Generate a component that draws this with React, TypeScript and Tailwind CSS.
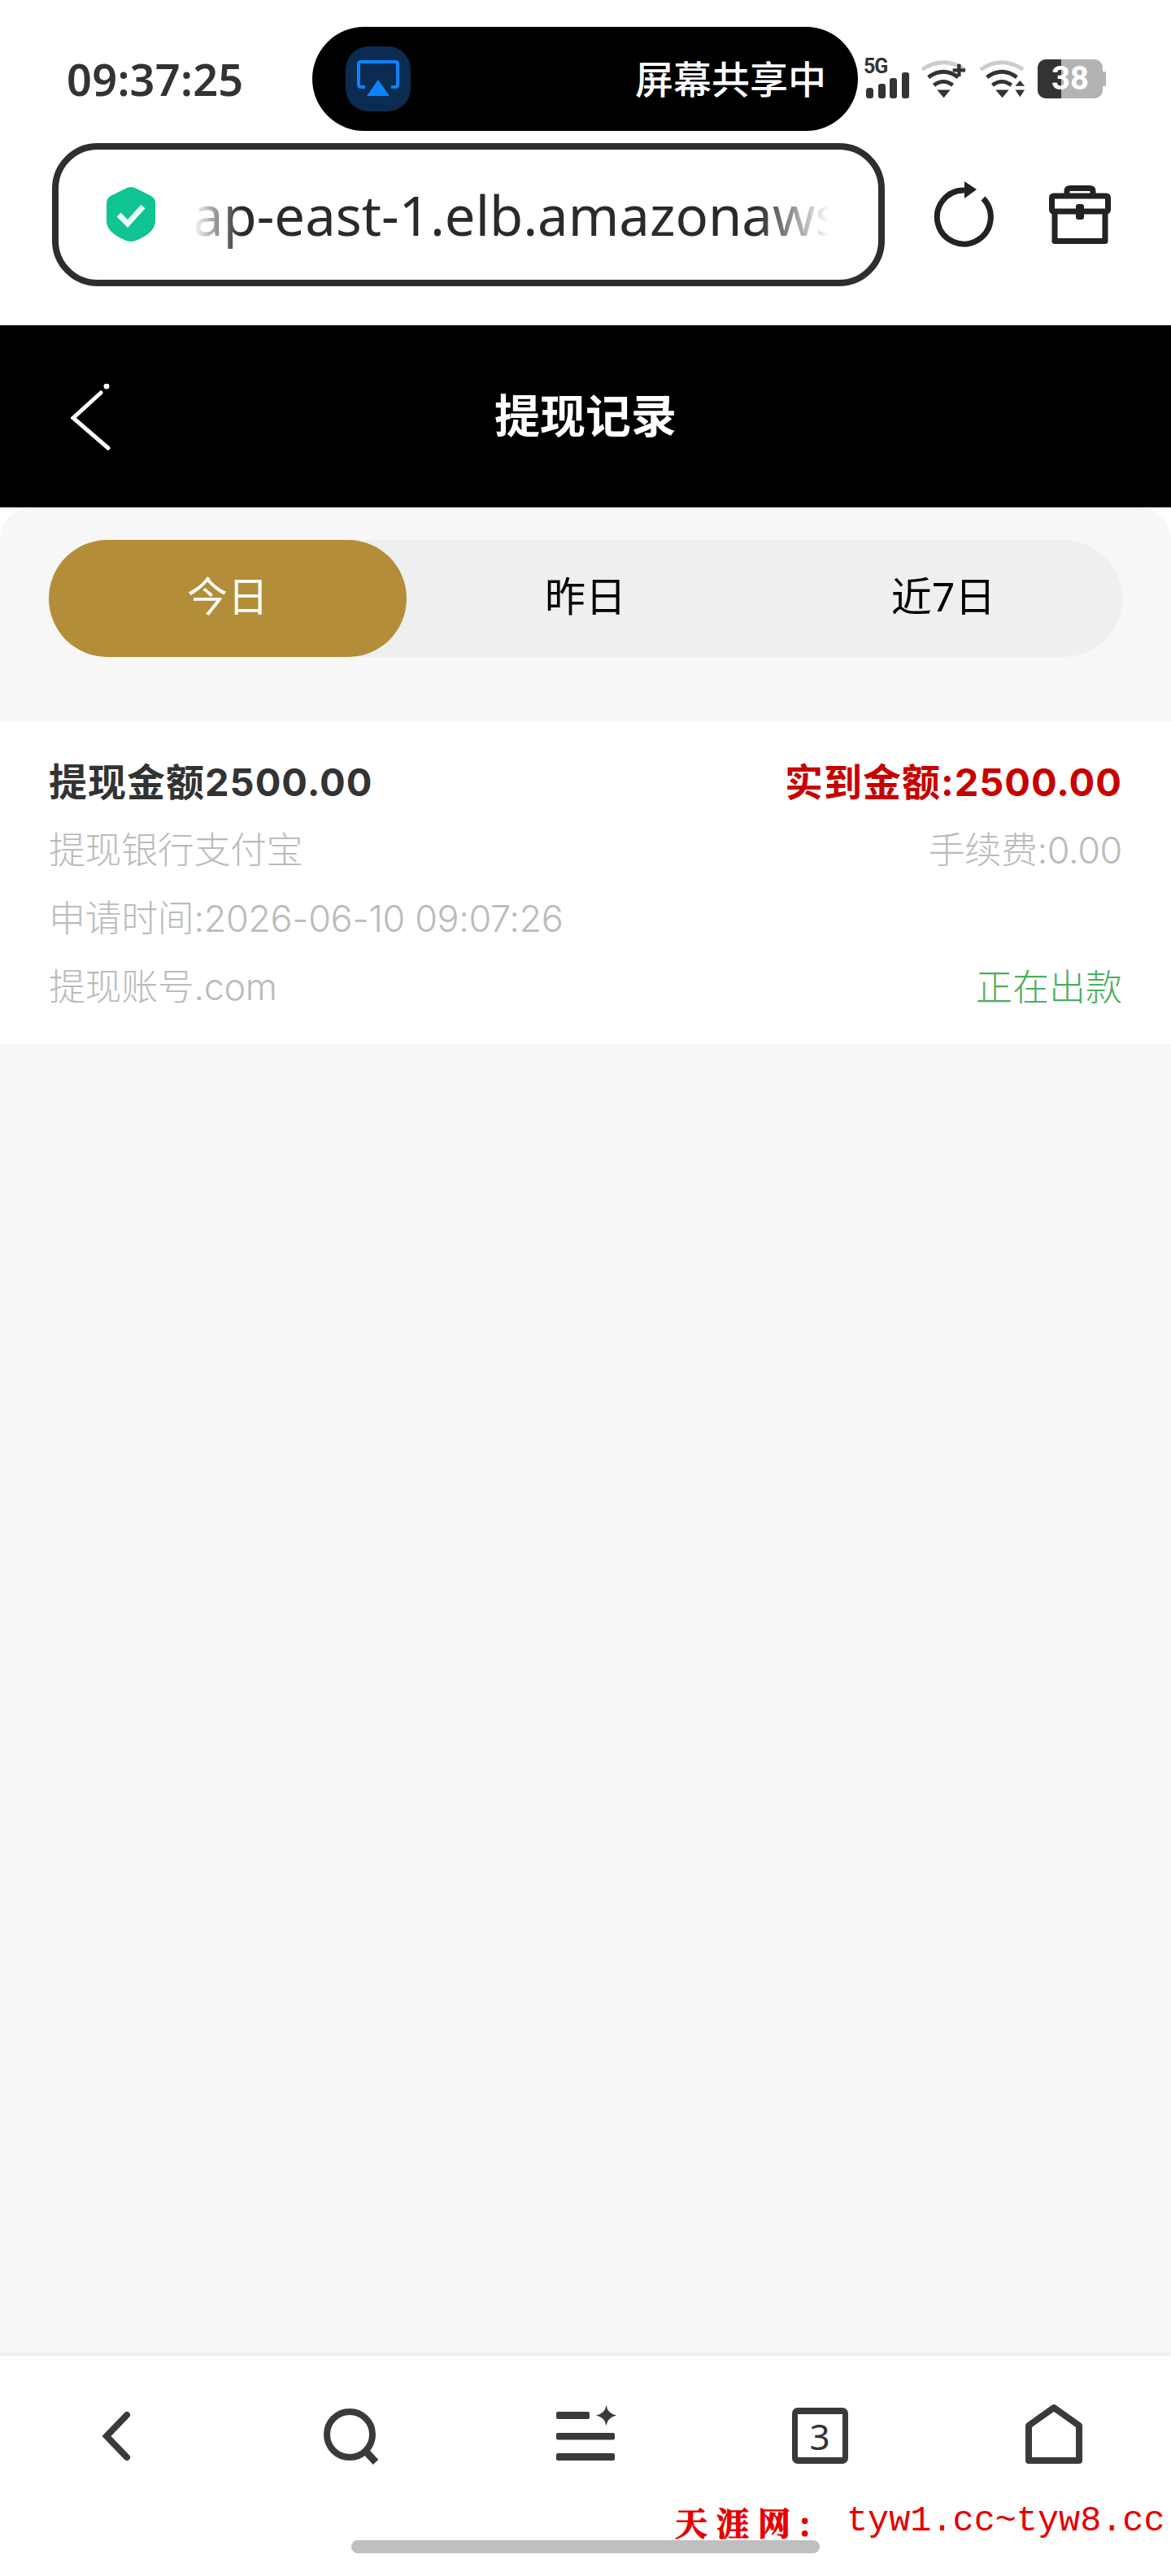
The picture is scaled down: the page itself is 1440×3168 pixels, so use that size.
import React from "react";

const Shield = () => (
  <svg width="62" height="68" viewBox="0 0 62 68" className="shrink-0">
    <path d="M31 0 Q35 0 40 3 L56 11 Q61 14 61 20 V42 Q61 56 37 66 Q31 68 25 66 Q1 56 1 42 V20 Q1 14 6 11 L22 3 Q27 0 31 0 Z" fill="#0fc492" />
    <path d="M16 34 L27 45 L46 24" fill="none" stroke="#e9fbf5" strokeWidth="7" />
  </svg>
);

const Refresh = () => (
  <svg width="74" height="82" viewBox="0 0 74 82" className="overflow-visible">
    <path d="M60 21 A33 33 0 1 1 37 11" fill="none" stroke="#222" strokeWidth="7" />
    <path d="M37 0 L52 10 L37 21 Z" fill="#222" />
  </svg>
);

const Case = () => (
  <svg width="76" height="72" viewBox="0 0 76 72" fill="none" stroke="#222" strokeWidth="7" strokeLinejoin="round">
    <path d="M22 12 V7 Q22 3.500 26 3.500 H50 Q54 3.500 54 7 V12" />
    <rect x="3.500" y="13" width="69" height="19" rx="2" />
    <path d="M7 32 V68.500 H69 V32" />
    <rect x="34" y="24" width="8" height="17" rx="2" fill="#222" strokeWidth="2" />
  </svg>
);

const Signal = () => (
  <div className="relative w-[56px] h-[48px]">
    <span className="absolute left-0 top-[-5px] text-[25px] leading-[28px] font-bold text-[#333] font-['Roboto',sans-serif] tracking-[-1px]">5G</span>
    <svg width="56" height="48" viewBox="0 0 56 48" fill="#333">
      <rect x="3" y="35" width="9" height="13" rx="3.500" />
      <rect x="18" y="30" width="9" height="18" rx="3" />
      <rect x="32" y="23" width="9" height="25" rx="3" />
      <rect x="47" y="16" width="9" height="32" rx="3" />
    </svg>
  </div>
);

const Wifi = ({ plus }: { plus?: boolean }) => (
  <svg width="58" height="48" viewBox="0 0 60 48" fill="none">
    <path d="M2 12 Q29 -6 56 12" stroke="#ccc" strokeWidth="5" />
    <path d="M10 22 Q29 8 48 22" stroke="#333" strokeWidth="5" />
    <path d="M17 32 Q29 23 41 32" stroke="#333" strokeWidth="5" />
    <path d="M21 38 H38 L29.500 48 Z" fill="#333" />
    {plus ? (
      <path d="M41 13 H57 M49 5 V21" stroke="#333" strokeWidth="4.500" />
    ) : (
      <>
        <path d="M46 33 H58 L52 26 Z" fill="#333" />
        <path d="M46 38 H58 L52 47 Z" fill="#333" />
      </>
    )}
  </svg>
);

const Battery = () => (
  <div className="flex items-center w-[84px] h-[48px]">
    <div className="relative w-[80px] h-[48px] rounded-[10px] overflow-hidden bg-[#b3b3b3] flex items-center justify-center">
      <div className="absolute left-0 top-0 w-[29px] h-[48px] bg-[#333]" />
      <span className="relative text-white font-bold text-[40px] leading-none font-['Roboto',sans-serif]">38</span>
    </div>
    <div className="w-[4px] h-[18px] bg-[#b3b3b3] rounded-r-[2px]" />
  </div>
);

const Row = ({ left, right, rightClass, leftClass }: { left: string; right?: string; rightClass?: string; leftClass?: string }) => (
  <div className="flex items-center justify-between h-[84px]">
    <span className={leftClass}>{left}</span>
    {right ? <span className={rightClass}>{right}</span> : null}
  </div>
);

export default function App() {
  const gray = "text-[45px] text-[#bbbbbb] font-light leading-none tracking-[-0.4px] font-['Inter','Noto_Sans_CJK_SC',sans-serif]";
  const strong = "text-[47px] font-bold leading-none tracking-[1px] font-['Inter','Noto_Sans_CJK_SC',sans-serif]";
  return (
    <div className="w-[1440px] h-[3168px] flex flex-col bg-white overflow-hidden relative font-['Noto_Sans','Noto_Sans_CJK_SC',sans-serif]">
      {/* status bar */}
      <div className="h-[176px] pt-[33px] pb-[15px] pl-[82px] flex items-center">
        <span className="w-[302px] text-[54px] leading-none font-semibold text-[#333] tracking-[0.3px]">09:37:25</span>
        <div className="w-[671px] h-[128px] rounded-[64px] bg-black flex items-center justify-between pl-[41px] pr-[39px]">
          <div className="w-[80px] h-[80px] rounded-[28px] bg-[#0b2c50] flex items-center justify-center">
            <svg width="52" height="46" viewBox="0 0 52 46" fill="none">
              <path d="M10 33 H5 Q2 33 2 30 V5 Q2 2 5 2 H47 Q50 2 50 5 V30 Q50 33 47 33 H42" stroke="#0a84ff" strokeWidth="4" />
              <path d="M26 24 L40 44 H12 Z" fill="#0a84ff" />
            </svg>
          </div>
          <span className="text-[47px] leading-none font-medium text-white">屏幕共享中</span>
        </div>
        <div className="ml-[7px] flex items-center gap-[14px]">
          <Signal />
          <Wifi plus />
          <Wifi />
          <Battery />
        </div>
      </div>

      {/* address bar */}
      <div className="h-[224px] pb-[48px] pl-[64px] flex items-center">
        <div className="relative w-[1024px] h-[176px] border-[8px] border-[#2e2e2e] rounded-[56px] flex items-center pl-[58px] pr-[60px]">
          <Shield />
          <div className="relative ml-[45px] flex-1 overflow-hidden">
            <div className="text-[67px] leading-[96px] text-[#2a2a2a] whitespace-nowrap">ap-east-1.elb.amazonaws</div>
            <div className="absolute left-0 top-0 w-[60px] h-full bg-linear-to-r from-white to-transparent" />
            <div className="absolute right-0 top-0 w-[90px] h-full bg-linear-to-l from-white to-transparent" />
          </div>
        </div>
        <div className="ml-[61px] flex items-center">
          <Refresh />
        </div>
        <div className="ml-[67px] flex items-center">
          <Case />
        </div>
      </div>

      {/* page header */}
      <div className="h-[224px] bg-black flex items-start relative">
        <div className="h-[224px] w-full pb-[4px] flex items-center justify-center">
          <span className="text-[56px] leading-none font-bold text-white">提现记录</span>
        </div>
        <svg className="absolute left-[87px] top-[72px]" width="50" height="84" viewBox="0 0 50 84" fill="none" stroke="#fff" strokeWidth="5" strokeLinecap="round">
          <path d="M37 11 L3 42 L46 79" />
          <circle cx="44" cy="3" r="2" fill="#fff" strokeWidth="3" />
        </svg>
      </div>

      {/* content */}
      <div className="flex-1 bg-[#f7f7f7] rounded-t-[40px] relative">
        <div className="pt-[40px] px-[60px]">
          <div className="h-[144px] rounded-[72px] bg-[#efefef] grid grid-cols-3 items-center">
            <div className="h-[144px] pb-[6px] rounded-[72px] bg-[#b38d38] flex items-center justify-center text-[50px] text-white leading-none">今日</div>
            <div className="pb-[6px] flex items-center justify-center text-[50px] text-black leading-none">昨日</div>
            <div className="pb-[6px] flex items-center justify-center text-[50px] text-black leading-none">近7日</div>
          </div>
        </div>
        <div className="mt-[79px] h-[397px] bg-white px-[60px] pt-[32px]">
          <Row left="提现金额2500.00" leftClass={`${strong} text-[#333]`} right="实到金额:2500.00" rightClass={`${strong} text-[#c80000]`} />
          <Row left="提现银行支付宝" leftClass={gray} right="手续费:0.00" rightClass={gray} />
          <Row left="申请时间:2026-06-10 09:07:26" leftClass={gray} />
          <Row left="提现账号.com" leftClass={gray} right="正在出款" rightClass="text-[45px] text-[#4cae5e] font-light leading-none" />
        </div>
      </div>

      {/* bottom bar */}
      <div className="h-[271px] bg-white shadow-[0_-2px_4px_rgba(0,0,0,0.07)] relative">
        <div className="grid grid-cols-5 h-[137px] items-end">
          <div className="flex justify-center">
            <svg width="72" height="76" viewBox="0 0 72 76" fill="none" stroke="#3a3a3a" strokeWidth="8" strokeLinecap="round">
              <path d="M48 12 L23 38 L48 64" />
            </svg>
          </div>
          <div className="flex justify-center">
            <svg width="72" height="76" viewBox="0 0 72 76" fill="none" stroke="#3a3a3a" strokeWidth="8">
              <circle cx="34" cy="36" r="28" />
              <path d="M55 58 L66 70" strokeWidth="9" />
            </svg>
          </div>
          <div className="flex justify-center">
            <svg width="76" height="76" viewBox="0 0 76 76" fill="#3a3a3a">
              <rect x="2" y="8" width="41" height="9" rx="2" />
              <rect x="2" y="34" width="72" height="8.500" rx="2" />
              <rect x="2" y="59" width="72" height="9" rx="2" />
              <path d="M63.500 0 Q65 10 76 12.500 Q65 15 63.500 25 Q62 15 51 12.500 Q62 10 63.500 0 Z" />
            </svg>
          </div>
          <div className="flex justify-center">
            <div className="w-[69px] h-[69px] border-x-[7px] border-y-[8px] border-[#3a3a3a] rounded-[7px] flex items-center justify-center mb-[4px]">
              <span className="text-[44px] leading-none text-[#333] font-['Noto_Sans',sans-serif]">3</span>
            </div>
          </div>
          <div className="flex justify-center">
            <svg width="72" height="78" viewBox="0 0 72 78" fill="none" stroke="#3a3a3a" strokeWidth="8" strokeLinejoin="round">
              <path d="M36 5 L67 27 V70 H5 V27 Z" />
            </svg>
          </div>
        </div>
        {/* watermark over the bar */}
        <div className="absolute left-[830px] top-[184px] flex items-center whitespace-nowrap text-[#e60000]">
          <span className="w-[211px] text-[40px] leading-[40px] font-bold [-webkit-text-stroke:1px_#e60000] font-['Noto_Serif_CJK_SC','Noto_Sans_CJK_SC',serif] tracking-[11px]">天涯网:</span>
          <span className="text-[43.500px] leading-[40px] font-['Liberation_Mono',monospace]">tyw1.cc~tyw8.cc</span>
        </div>
        <div className="absolute left-[432px] top-[227px] w-[576px] h-[16px] rounded-[8px] bg-[#bfbfbf]" />
      </div>
    </div>
  );
}
